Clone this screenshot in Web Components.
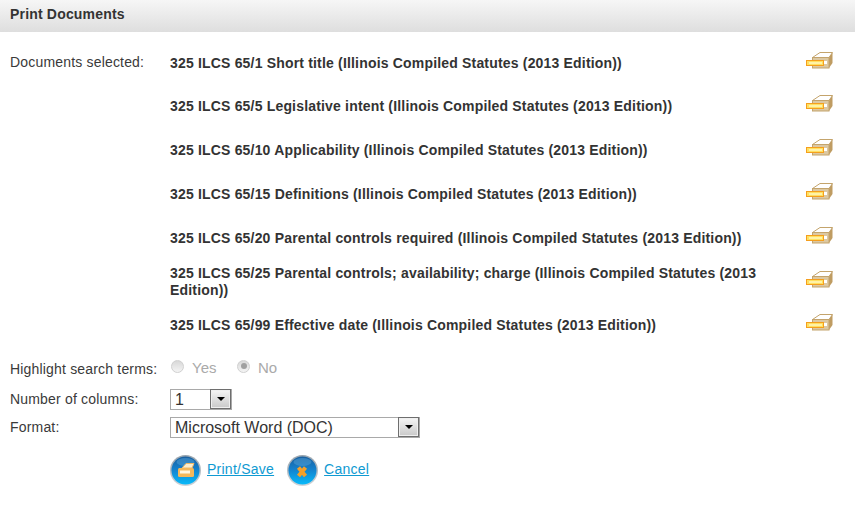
<!DOCTYPE html>
<html>
<head>
<meta charset="utf-8">
<title>Print Documents</title>
<style>
  body { margin: 0; background: #fff; font-family: "Liberation Sans", Arial, sans-serif; font-size: 14px; letter-spacing: 0.18px; color: #3a3a3a; }
</style>
</head>
<body>
<print-panel heading="Print Documents">
  <form-row label="Documents selected:" class="docs">
    <doc-row tight>325 ILCS 65/1 Short title (Illinois Compiled Statutes (2013 Edition))</doc-row>
    <doc-row>325 ILCS 65/5 Legislative intent (Illinois Compiled Statutes (2013 Edition))</doc-row>
    <doc-row>325 ILCS 65/10 Applicability (Illinois Compiled Statutes (2013 Edition))</doc-row>
    <doc-row>325 ILCS 65/15 Definitions (Illinois Compiled Statutes (2013 Edition))</doc-row>
    <doc-row>325 ILCS 65/20 Parental controls required (Illinois Compiled Statutes (2013 Edition))</doc-row>
    <doc-row tight>325 ILCS 65/25 Parental controls; availability; charge (Illinois Compiled Statutes (2013 Edition))</doc-row>
    <doc-row>325 ILCS 65/99 Effective date (Illinois Compiled Statutes (2013 Edition))</doc-row>
  </form-row>
  <form-row label="Highlight search terms:" height="28" label-nudge="3" style="margin-top: 7px">
    <fake-radio>Yes</fake-radio>
    <fake-radio checked>No</fake-radio>
  </form-row>
  <form-row label="Number of columns:" height="28" style="margin-top: 3px">
    <fake-select width="62">1</fake-select>
  </form-row>
  <form-row label="Format:" height="28">
    <fake-select width="250">Microsoft Word (DOC)</fake-select>
  </form-row>
  <action-bar>
    <action-link icon="print">Print/Save</action-link>
    <action-link icon="cancel">Cancel</action-link>
  </action-bar>
</print-panel>

<script>
class PrintPanel extends HTMLElement {
    constructor() {
        super();
        this.attachShadow({ mode: 'open' });
    }
    connectedCallback() {
        this.shadowRoot.innerHTML = `
        <style>
            :host { display: block; }
            h1 { margin: 0; height: 32px; box-sizing: border-box; padding: 6px 10px 0; font-size: 14px; line-height: 17px; font-weight: bold; color: #333;
                 background: linear-gradient(#f6f6f6, #dedede); }
            .body { padding-top: 9px; }
        </style>
        <h1>${this.getAttribute('heading')}</h1>
        <div class="body"><slot></slot></div>
        `;
    }
}

class FormRow extends HTMLElement {
    constructor() {
        super();
        this.attachShadow({ mode: 'open' });
    }
    connectedCallback() {
        const h = this.getAttribute('height');
        const nudge = this.getAttribute('label-nudge') || 1;
        this.shadowRoot.innerHTML = `
        <style>
            :host { display: flex; padding-left: 10px; ${h ? `height: ${h}px; align-items: center;` : ''} }
            .label { width: 160px; flex: none; line-height: 17px; ${h ? `margin-top: ${nudge}px;` : 'padding-top: 13px;'} }
            .value { flex: 1; display: ${h ? 'flex' : 'block'}; align-items: center; min-width: 0; }
        </style>
        <div class="label">${this.getAttribute('label')}</div>
        <div class="value"><slot></slot></div>
        `;
    }
}

class DocRow extends HTMLElement {
    constructor() {
        super();
        this.attachShadow({ mode: 'open' });
    }
    connectedCallback() {
        this.shadowRoot.innerHTML = `
        <style>
            :host { display: flex; align-items: center; min-height: 44px; }
            :host([tight]) { margin-bottom: -1px; }
            .title { width: 620px; flex: none; font-weight: bold; line-height: 17px; color: #333; }
            svg { display: block; margin-left: 16px; margin-top: -5px; }
        </style>
        <div class="title"><slot></slot></div>
        <svg width="27" height="17" viewBox="0 0 27 17">
            <path d="M14 .5h12.500L23 5.500H6.500z" fill="#fff" stroke="#c4a46c"/>
            <path d="M23 5.500l3.500-5V11L23 16z" fill="#bf9c62"/>
            <rect x="6.500" y="5.500" width="16.500" height="10.500" fill="#dcc8a2" stroke="#c4a46c"/>
            <rect x="18" y="9" width="3" height="3" fill="#fff"/>
            <rect x=".5" y="8.500" width="17" height="5" fill="#ffe060" stroke="#f59f1e"/>
            <rect x="3" y="10" width="13" height="2" fill="#fff2a8"/>
        </svg>
        `;
    }
}

class FakeRadio extends HTMLElement {
    constructor() {
        super();
        this.attachShadow({ mode: 'open' });
    }
    connectedCallback() {
        const on = this.hasAttribute('checked');
        this.shadowRoot.innerHTML = `
        <style>
            :host { display: inline-flex; align-items: center; color: #aaa; width: 66px; font-size: 15px; letter-spacing: 0; }
            .dot { width: 13px; height: 13px; box-sizing: border-box; border-radius: 50%; border: 1px solid #d0d0d0; margin: -4px 8px 0 1px;
                   background: linear-gradient(#d8d8d8, #f4f4f4); display: flex; align-items: center; justify-content: center; }
            .dot i { width: 6px; height: 6px; border-radius: 50%; background: #a0a0a0; display: ${on ? 'block' : 'none'}; }
            .txt { margin-top: -2px; }
        </style>
        <span class="dot"><i></i></span><span class="txt"><slot></slot></span>
        `;
    }
}

class FakeSelect extends HTMLElement {
    constructor() {
        super();
        this.attachShadow({ mode: 'open' });
    }
    connectedCallback() {
        this.shadowRoot.innerHTML = `
        <style>
            :host { display: flex; box-sizing: border-box; width: ${this.getAttribute('width')}px; height: 21px; border: 1px solid #a9a9a9; background: #fff; color: #333; font-size: 16px; letter-spacing: 0; }
            .text { flex: 1; padding-left: 4px; line-height: 19px; }
            .btn { width: 21px; height: 20px; margin-top: -1px; flex: none; box-sizing: border-box; border: 1px solid #6e6e6e; box-shadow: inset 0 0 0 1px #efefef;
                   background: linear-gradient(#f6f6f6, #c9c9c9); display: flex; align-items: center; justify-content: center; }
            .btn i { width: 0; height: 0; border: 4px solid transparent; border-top: 4px solid #000; border-bottom: 0; }
        </style>
        <span class="text"><slot></slot></span>
        <span class="btn"><i></i></span>
        `;
    }
}

class ActionBar extends HTMLElement {
    constructor() {
        super();
        this.attachShadow({ mode: 'open' });
    }
    connectedCallback() {
        this.shadowRoot.innerHTML = `
        <style>
            :host { display: flex; align-items: center; gap: 13px; padding: 14px 0 0 170px; }
        </style>
        <slot></slot>
        `;
    }
}

class ActionLink extends HTMLElement {
    constructor() {
        super();
        this.attachShadow({ mode: 'open' });
    }
    connectedCallback() {
        const glyph = this.getAttribute('icon') === 'print'
            ? `<path d="M12 13 16 8.500h8L22 13z" fill="#fbeecf" stroke="#f0b968"/>
               <rect x="8" y="13" width="16" height="9" rx="1.500" fill="#f5b85a"/>
               <rect x="10" y="15.500" width="10" height="3" fill="#fff6e0"/>`
            : `<path d="M11.500 12.500 18.500 21M18.500 12.500 11.500 21" stroke="#f5a028" stroke-width="4"/>`;
        this.shadowRoot.innerHTML = `
        <style>
            :host { display: inline-flex; align-items: center; gap: 6px; letter-spacing: 0.25px; }
            a { color: #0f9ad2; text-decoration: underline; margin-top: -4px; }
            svg { display: block; }
        </style>
        <svg width="31" height="31" viewBox="0 0 31 31">
            <defs>
                <linearGradient id="g" x1="0" y1="0" x2="0" y2="1">
                    <stop offset="0" stop-color="#1a5f9e"/>
                    <stop offset="0.45" stop-color="#1480cc"/>
                    <stop offset="1" stop-color="#08bafa"/>
                </linearGradient>
                <linearGradient id="r" x1="0" y1="0" x2="0" y2="1">
                    <stop offset="0" stop-color="#98a4ae"/>
                    <stop offset="1" stop-color="#d0d4d8"/>
                </linearGradient>
            </defs>
            <circle cx="15.500" cy="15.500" r="15.500" fill="url(#r)"/>
            <circle cx="15.500" cy="15.500" r="14" fill="url(#g)"/>
            <ellipse cx="15.500" cy="7" rx="9" ry="4" fill="#5aa8dc" opacity="0.45"/>
            ${glyph}
        </svg>
        <a href="#"><slot></slot></a>
        `;
    }
}

customElements.define('print-panel', PrintPanel);
customElements.define('form-row', FormRow);
customElements.define('doc-row', DocRow);
customElements.define('fake-radio', FakeRadio);
customElements.define('fake-select', FakeSelect);
customElements.define('action-bar', ActionBar);
customElements.define('action-link', ActionLink);
</script>
</body>
</html>
